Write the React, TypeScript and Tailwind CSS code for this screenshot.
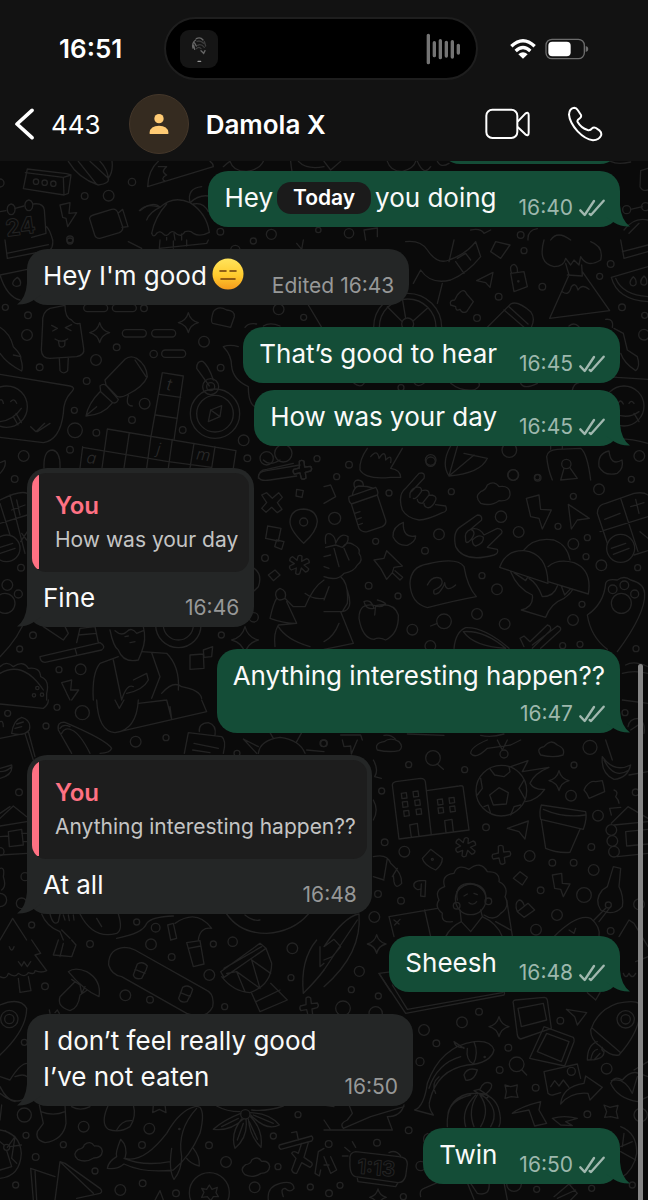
import { ReactNode } from "react";
import { clsx } from "clsx";

interface Quote {
  author: string;
  text: string;
}

interface Message {
  lines: string[];
  time: string;
  mine?: boolean;
  emoji?: boolean;
  edited?: boolean;
  stacked?: boolean;
  tail?: boolean;
  grouped?: boolean;
  split?: boolean;
  quote?: Quote;
}

interface DoodleTile {
  x: number;
  y: number;
  dots: number[][];
  paths: string[];
  labels?: {
    x: number;
    y: number;
    size: number;
    turn: number;
    text: string;
    outlined?: boolean;
  }[];
}

// A split message leaves room for the floating date between its parts
const messages: Message[] = [
  { lines: ["Hey", "you doing"], time: "16:40", mine: true, tail: true, grouped: true, split: true },
  { lines: ["Hey I'm good"], time: "16:43", emoji: true, edited: true, tail: true },
  { lines: ["That’s good to hear"], time: "16:45", mine: true },
  { lines: ["How was your day"], time: "16:45", mine: true, tail: true, grouped: true },
  {
    lines: ["Fine"],
    time: "16:46",
    tail: true,
    quote: { author: "You", text: "How was your day" },
  },
  {
    lines: ["Anything interesting happen??"],
    time: "16:47",
    mine: true,
    tail: true,
    stacked: true,
  },
  {
    lines: ["At all"],
    time: "16:48",
    tail: true,
    quote: { author: "You", text: "Anything interesting happen??" },
  },
  { lines: ["Sheesh"], time: "16:48", mine: true, tail: true },
  { lines: ["I don’t feel really good", "I’ve not eaten"], time: "16:50", tail: true },
  { lines: ["Twin"], time: "16:50", mine: true, tail: true },
];

const sparkle = (x: number, y: number, r: number) => {
  const k = r / 5;
  return `M${x} ${y - r}Q${x + k} ${y - k} ${x + r} ${y}Q${x + k} ${y + k} ${x} ${y + r}Q${x - k} ${y + k} ${x - r} ${y}Q${x - k} ${y - k} ${x} ${y - r}Z`;
};

const pill = (x: number, y: number, w: number) =>
  `M${x} ${y}h${w}a11 11 0 0 1 0 22h${-w}a11 11 0 0 1 0-22Z`;

const square = (x: number, y: number) => `M${x - 8} ${y - 7}l15-2 2 16-15 2Z`;

const cloud = (x: number, y: number) =>
  `M${x - 30} ${y + 20}q-18-16 2-30q16-2 18-14q18-14 30 4q22-2 24 16q-2 20-26 20q-24 16-48 4Z`;

const plus = (x: number, y: number) =>
  `M${x - 7} ${y - 26}q7-6 14 0l2 17 18-2q6 7 0 14l-16 4 2 17q-7 6-14 2l-4-17-17 3q-6-6-2-14l17-4Z`;

const star = (x: number, y: number) =>
  `M${x - 6} ${y - 26}q6-6 12 0l-1 15 15-8q8 2 8 12l-16 7 14 11q0 8-10 10l-12-12-5 17q-8 5-12-1l2-16-15 6q-7-4-5-12l14-7-14-9q0-9 9-12l13 11Z`;

// Drawn at three times the size they are shown at
const tiles: DoodleTile[] = [
  {
    x: 0,
    y: 0,
    dots: [[0, 549, 12], [108, 545, 8], [134, 548, 8], [160, 551, 8], [396, 546, 11], [254, 588, 10], [326, 587, 16], [661, 695, 10], [814, 703, 15], [955, 690, 8], [210, 718, 10]],
    paths: [
      "M82 507L200 521L213 525L205 580L192 585L70 566ZM76 518L190 532L192 585M190 532L213 525",
      "M205 484Q235 535 295 555Q330 550 325 535L270 484M235 484L290 553M300 484Q325 510 325 540M336 484Q340 515 325 535",
      "M443 560L640 500Q640 490 630 484M443 560Q445 510 475 484M475 500L500 500Q480 515 500 525Q480 535 495 545",
      "M670 500Q680 490 690 484Q700 515 740 514Q780 508 790 484M872 484Q875 515 880 530M895 484Q920 510 972 500",
      "M0 635L18 632M45 625L72 618M100 612Q130 608 133 630L138 700L95 712M140 680Q150 690 158 720",
      "M33 612a12 16 0 1 0 1 0ZM86 600a12 16 0 1 0 1 0Z",
      "M180 615L210 608L207 640L230 638L203 680L198 655L188 652Z",
      "M270 660Q265 650 280 645L335 628Q350 625 354 640L368 680Q370 692 358 698L300 715Q288 716 284 705ZM354 640L368 628L384 680L366 682",
      "M418 632Q440 608 480 622Q450 635 440 660M480 622Q520 585 570 608Q620 640 628 697M455 700Q465 650 500 612M570 608Q560 565 605 560M570 608Q600 580 635 590M580 612Q610 605 625 635",
      "M455 700Q460 715 470 700Q480 690 490 702Q500 712 510 698Q520 690 530 702Q545 712 555 695Q570 690 580 700Q600 712 628 697M500 712V720M522 700L525 720M545 702V720M420 632Q460 600 480 622",
    ],
    labels: [{ x: 20, y: 710, size: 70, turn: -8, text: "24", outlined: true }],
  },
  {
    x: 324,
    y: 0,
    dots: [[75, 700, 14], [590, 705, 10], [908, 629, 12], [965, 620, 12]],
    paths: [
      "M0 484L20 510L50 484M190 484Q200 515 235 514Q270 505 275 484M280 484Q300 530 320 500M340 484Q350 505 375 490M860 484Q880 495 920 486",
      "M972 505L950 512L948 560Q955 575 972 570M920 628L955 620",
      "M120 690L125 720M120 690L160 684V710M440 690Q470 684 480 700L500 690M612 720Q610 690 640 686M680 720Q700 690 740 720M900 690Q930 650 972 660M915 700L945 670",
    ],
  },
  {
    x: 0,
    y: 240,
    dots: [[16, 202, 9], [84, 226, 10], [81, 285, 16], [350, 322, 10], [288, 360, 16], [119, 382, 10], [260, 423, 10], [434, 491, 16], [223, 511, 9], [396, 540, 10], [225, 571, 22], [289, 578, 10], [548, 570, 10], [71, 648, 16], [210, 629, 10], [731, 601, 16], [742, 655, 10], [951, 656, 9], [836, 208, 16], [911, 232, 9], [612, 305, 16], [461, 342, 11], [662, 383, 10], [432, 205, 10], [800, 655, 20], [850, 640, 26], [706, 30, 14], [645, 521, 74], [645, 521, 55], [632, 440, 12], [632, 440, 24], [20, 500, 62], [210, 3, 9], [760, 3, 9]],
    paths: [
      "M195 196L150 205Q125 215 128 250L124 330Q125 355 150 355L230 350Q255 345 251 325L240 250Q225 255 215 240Q195 235 195 196M178 355L180 392Q190 405 203 392L205 352M155 256L172 265L158 273M215 254L196 263L213 272M165 297Q185 310 203 297M175 302L178 318Q186 326 194 316L195 301",
      sparkle(299, 278, 30),
      sparkle(565, 248, 30),
      pill(378, 269, 50),
      pill(466, 269, 50),
      pill(496, 330, 50),
      pill(262, 193, 50),
      pill(348, 193, 50),
      "M640 215Q655 195 680 210Q705 212 703 230L692 262L638 250Q630 245 640 215",
      "M315 420L375 358Q390 345 410 355Q440 375 442 410Q430 440 380 465Q360 475 350 468L318 435ZM300 438Q310 428 320 438L355 478Q350 492 338 488L302 455ZM300 455Q265 490 258 528Q310 525 338 488M260 525L290 500M405 360L438 410M385 466Q375 498 397 498",
      "M487 398L550 408L522 600M487 398L453 590M478 463L542 472M467 525L532 535M322 567L708 632L700 684M322 567L306 684M388 578L372 684M453 588L440 684M517 598L505 684M582 610L570 684M645 620L635 684M248 622L505 665L635 682M248 620L240 684",
      "M625 545L632 510L665 497L660 530ZM632 510L660 530M628 438L590 385Q590 362 608 364Q625 375 640 420",
      "M0 403L210 438Q228 442 215 455Q190 480 190 520Q180 600 130 608L0 592M0 545Q40 540 64 505M48 520L64 548M40 530L54 555M92 560L108 575L134 550M112 575L150 550M32 485Q42 472 50 490M0 480Q8 476 10 490",
      "M0 262Q30 280 40 320Q65 345 62 355Q70 380 65 393Q20 370 0 340M40 345L62 350",
      "M82 88L0 105Q20 170 60 180M52 112q-14 10-14 20q6 12 22 4q6-14-8-24ZM15 0L22 55L150 30Q160 20 158 0M20 40L145 14M385 5L425 25M480 0L478 25L620 10L625 0M520 3V25M560 0V18M890 10L905 28L910 0",
      "M670 320Q690 312 715 320M670 320Q695 345 695 380Q700 420 745 440Q745 490 765 500M735 262Q745 248 770 252M790 258Q810 245 840 258M925 195L965 262",
      "M0 700Q20 680 15 662L0 668M132 684Q130 630 158 630Q182 635 180 684M775 715Q775 690 800 688L880 670",
      plus(905, 690),
    ],
    labels: [
      { x: 498, y: 450, size: 50, turn: 8, text: "t" },
      { x: 468, y: 642, size: 48, turn: 8, text: "j" },
      { x: 258, y: 668, size: 48, turn: 8, text: "a" },
      { x: 587, y: 658, size: 48, turn: 8, text: "m" },
    ],
  },
  {
    x: 324,
    y: 240,
    dots: [[600, 32, 9], [860, 72, 10], [827, 109, 9], [655, 140, 10], [524, 170, 10], [459, 234, 10], [894, 202, 10], [962, 226, 9], [960, 284, 16], [231, 443, 9], [320, 660, 16], [75, 674, 10], [556, 630, 22], [568, 705, 16], [946, 648, 16], [38, 710, 9], [640, 712, 8], [583, 124, 2], [251, 262, 102], [251, 262, 85], [251, 252, 18], [900, 498, 60], [727, 672, 14]],
    paths: [
      "M235 175L245 235M310 205L268 242M190 200L235 245",
      "M245 5Q290 0 310 30Q340 75 375 60Q430 40 455 5L470 50Q430 100 380 120Q320 135 290 90L268 130M355 130L340 190M390 0L375 65M395 65L420 100M400 55L425 40L440 60",
      "M515 5L558 15L530 55L500 35ZM560 100L600 95L610 140L570 155ZM562 98Q555 75 570 73Q582 78 580 95",
      "M458 122L507 97L498 142L485 128Z",
      "M400 165Q420 140 428 162L448 185L428 215Q415 222 408 208Q395 215 395 200L380 195Q375 180 392 180Z",
      "M660 0Q640 70 690 80Q720 80 725 55L740 75L750 60L765 75L770 50Q790 85 830 60Q840 20 800 5",
      "M735 105L677 235L857 212L775 95M735 105L725 70M775 108L773 75M730 105L775 108M715 155Q735 170 742 140Q755 125 762 150Q775 130 795 148",
      "M490 262L560 192Q580 180 620 215Q635 235 622 262M540 210L600 262M555 200L612 252",
      "M890 0L900 55L972 35M895 35L972 15M862 112L972 80M862 112Q880 180 972 185M875 115Q895 165 972 170M928 110q-14 14-8 24q10 8 16-2q2-14-8-22ZM960 108q-14 14-8 24q10 8 16-2q2-14-8-22Z",
      "M845 238Q870 235 865 262M870 265L898 280L910 330L940 350Q950 380 935 392Q900 370 890 340M735 258Q750 245 765 260",
      "M820 425Q835 405 880 412L972 418M850 600Q900 590 972 610M745 450Q750 430 765 428M882 490Q890 475 898 492M915 490Q922 478 930 490M870 520Q910 540 945 515M930 520L945 545",
      "M130 625Q105 660 108 690Q125 720 200 712L230 712Q230 690 200 685L235 625M140 650Q160 625 165 655Q185 625 185 660Q205 640 200 668",
      "M380 618Q350 670 375 708Q470 700 490 655L420 640M375 708L400 620M375 708L450 645M90 430Q110 445 120 430M380 430Q410 455 450 450Q470 440 465 430M270 428Q280 445 300 430M590 430Q600 450 640 430",
      "M668 650Q670 630 700 628L770 625Q790 640 800 720M668 650Q672 690 685 720M720 685L710 720L760 715L737 682M680 628V610M715 625V610",
      "M855 633Q820 640 825 680Q840 710 880 700Q900 685 894 660Q860 680 855 633",
    ],
  },
  {
    x: 0,
    y: 460,
    dots: [[44, 57, 10], [22, 375, 16], [55, 402, 12], [63, 323, 10], [99, 526, 10], [59, 567, 9], [177, 629, 9], [242, 628, 16], [664, 525, 9], [761, 472, 14], [795, 294, 10], [911, 186, 12], [112, 684, 5], [102, 706, 5], [126, 704, 5], [20, 265, 40], [15, 430, 30], [535, 495, 68], [535, 495, 45]],
    paths: [
      "M0 120Q60 90 82 100M0 130L30 225M30 105L75 280M0 190L82 165M35 150L75 135M50 120L60 165M0 262L38 250M0 280L45 265M65 220L80 240M82 215L62 245",
      "M785 105L800 98L817 115L836 98L847 112L832 128L846 148L832 158L815 142L798 157L785 145L800 128Z",
      "M911 250Q870 210 870 185Q872 148 911 147Q950 150 952 185Q950 215 911 250",
      "M803 198L843 205L835 243L797 235ZM830 240L852 245L845 268L824 260ZM805 345L825 330L840 345L820 362ZM890 88L910 92L906 112L888 108ZM755 320Q790 340 775 380L755 400",
      star(900, 315),
      "M775 50Q775 35 800 32L900 15M775 50Q780 65 810 60L890 48M790 0Q810 20 840 0",
      plus(905, 30),
      "M810 475Q820 430 830 415Q820 395 840 385Q862 392 855 415Q835 425 832 415M855 415L880 440L915 440Q940 380 972 360M810 475Q850 490 890 490L860 425M890 490L835 495Q820 520 825 560M835 500Q860 540 930 560M915 400Q940 420 972 415",
      "M120 590L300 548Q320 560 305 570L135 607Q120 605 120 590M225 565L230 582M230 548L240 505L285 500L295 548M235 525L290 520M130 500L190 540L205 520L195 500",
      "M330 510Q340 560 355 570Q370 610 415 600L425 575Q440 540 430 500M345 512Q365 530 380 515Q395 500 410 520L430 512M390 548L405 545M375 530L385 528",
      "M280 720Q275 640 300 610L355 590M340 600L365 720M425 575L500 580Q540 620 535 690M455 578L480 650L455 715M400 660L440 640L445 660Q430 690 380 700M485 700Q520 660 545 680Q600 690 605 715M365 720Q380 670 400 680",
      "M570 585L610 582L612 625L570 628ZM610 570L638 560L635 590L612 592Z",
      sparkle(735, 540, 40),
      "M185 668L215 660L212 690L236 690L215 720M185 668L200 700L210 720",
      "M0 620Q20 600 40 620Q70 600 85 625Q120 620 122 650Q150 660 140 700V720M0 640Q70 600 130 690M0 590Q60 530 78 470",
    ],
  },
  {
    x: 324,
    y: 460,
    dots: [[320, 5, 14], [567, 45, 16], [641, 53, 10], [825, 88, 16], [748, 109, 9], [922, 58, 9], [195, 99, 9], [382, 95, 9], [32, 175, 18], [531, 170, 17], [584, 216, 16], [345, 223, 16], [155, 244, 9], [303, 272, 10], [702, 199, 9], [748, 252, 16], [790, 233, 9], [786, 290, 9], [832, 316, 16], [941, 323, 9], [134, 377, 10], [222, 408, 9], [474, 347, 9], [519, 388, 16], [774, 433, 9], [459, 462, 16], [542, 492, 16], [747, 480, 16], [360, 484, 22], [265, 509, 16], [319, 558, 16], [716, 557, 9], [768, 553, 9], [936, 566, 9], [890, 265, 42], [892, 430, 30], [866, 388, 13], [901, 376, 13], [932, 402, 12], [903, 758, 9]],
    paths: [
      "M75 110L155 82Q165 95 160 105L82 132Q72 125 75 110M82 132L105 205Q115 218 130 215L175 200Q188 192 185 180L160 105M85 105Q90 80 105 78Q130 78 150 85M92 82Q85 62 102 60Q118 62 118 76M92 160L108 155M98 178L112 173M102 195L115 190",
      "M235 150Q220 105 245 85L285 40Q305 35 300 55L262 95M335 134L365 138Q372 155 355 158Q310 180 285 180Q250 175 235 150M258 112Q255 90 275 82Q295 78 292 95Q275 120 268 115M292 92Q318 85 315 105L295 130Q280 130 280 118M315 105Q340 105 335 120Q325 145 310 143Q300 140 300 130",
      "M470 130Q450 110 470 95Q485 90 490 75Q510 60 525 80Q560 75 558 105Q555 125 525 122Q500 140 470 130",
      "M607 115L645 105L650 148L682 150L655 207L645 175L620 170Z",
      "M733 133L796 175L760 180L742 207Z",
      "M820 160Q820 135 845 130L930 100Q960 95 972 105M820 160L850 250M890 115L942 275M828 215L972 170M842 178L888 160M920 140L960 128M935 118L945 160M862 265L905 250M868 283L915 265M930 285L972 272M948 215L972 235",
      "M238 187Q205 200 207 230Q220 258 250 256Q275 245 275 228Q235 235 238 187",
      "M395 260Q385 215 410 200L460 165Q475 165 473 180L440 208Q465 200 480 225L520 205Q538 208 533 220L490 262L520 268Q525 280 510 285Q420 310 395 260M425 240Q420 215 440 208Q460 215 440 240Q425 255 425 240M445 240Q465 220 478 232Q480 250 455 258Q445 255 445 240",
      "M150 300L180 295L188 272L235 318L210 322L205 338L188 358L170 325ZM205 338L228 360L236 352L213 332",
      "M258 370Q260 320 310 312Q400 290 420 320Q430 380 457 410Q400 420 310 443Q260 430 258 370M310 375Q325 345 350 355Q365 375 330 390Q325 410 345 398Q360 380 362 368Q365 400 395 375",
      "M527 322Q545 270 600 272Q670 280 672 370ZM598 272Q630 230 690 240Q730 255 738 300M672 320Q700 295 750 308Q805 330 793 402L672 365M560 335Q580 385 625 405Q630 440 592 450L665 472Q680 430 720 415Q740 400 745 390M570 338L605 362L612 350M615 355Q640 370 655 410Q690 410 700 378M712 378L722 405L738 388",
      "M845 370Q850 355 880 360Q900 345 920 360Q960 370 962 400Q965 460 880 575M845 370Q840 430 790 465Q800 530 850 568",
      "M155 437Q105 425 105 475Q115 535 150 538Q165 530 185 540Q225 520 223 465Q210 425 155 437L152 465M120 425Q140 415 150 445Q125 450 120 425M160 420Q180 425 185 432Q170 445 155 437",
      "M390 565Q395 515 425 503Q480 500 555 565M418 515Q480 510 545 565Q450 560 418 515M320 498L340 490",
      "M600 560L588 535L600 528L618 545L670 495Q685 500 678 512L625 565M625 555L700 498Q715 502 708 512L650 565",
      "M5 250Q0 215 20 222Q35 230 35 250Q50 215 72 230Q75 250 55 262L35 255L5 262M55 262Q70 240 90 255Q110 265 105 280Q120 300 100 315Q90 335 60 340Q40 365 0 350M30 265L45 320M60 265L75 300M0 290L20 285M0 320L15 325",
      "M0 80L20 75L35 110L0 130M50 350Q75 370 70 430L55 455L0 455M55 455Q90 450 70 390M50 455L88 550L0 568M45 490Q30 530 0 545M15 380L0 420",
      "M905 615Q930 600 972 620M895 640Q930 630 972 640M895 720L972 730M912 800Q915 775 945 775Q965 790 960 820M920 810L950 790",
      "M50 825H110L115 840M250 822L360 826M180 826Q200 822 215 838M470 826Q500 834 540 822",
    ],
  },
  {
    x: 0,
    y: 700,
    dots: [[23, 40, 9], [171, 22, 9], [247, 38, 21], [138, 78, 9], [407, 125, 16], [498, 113, 9], [57, 277, 10], [711, 160, 9], [65, 610, 16], [95, 675, 9], [410, 666, 9], [467, 683, 13], [970, 130, 10], [75, 530, 12], [0, 600, 20], [0, 455, 12]],
    paths: [
      "M0 12L130 25Q145 15 145 0M290 0Q295 95 345 98Q410 90 415 0M345 0L358 25L372 0M345 98L620 35L605 0M500 0L515 58M415 10L500 0M515 58L510 20",
      "M175 90Q170 65 195 67Q320 120 335 145Q330 160 300 160M175 90L215 160M185 100Q195 80 215 90Q240 100 270 160M180 85Q190 70 210 80",
      "M35 100Q40 60 65 52Q95 60 88 90Q70 110 35 100M45 85L65 80M50 72L70 66M0 115L75 100L100 180M85 95L105 170M0 205L35 195Q40 225 0 235M0 215Q20 215 35 200M0 65Q10 60 10 80",
      "M0 355L40 318L80 350M0 340L30 320M0 378L80 365M25 395L65 388L70 435L28 440ZM0 410L25 408M0 465L82 460M65 400H82M70 425H82M0 505Q15 500 10 530Q20 560 5 570",
      "M553 160L565 98L665 110Q680 120 670 160M598 95Q595 70 625 68Q650 75 645 105M582 130L655 145M578 150L630 158",
      "M775 160Q780 120 840 112Q900 120 915 160M775 140L730 117L770 160M810 98L820 115M905 98L890 125M920 150L972 155",
      "M125 642Q140 680 180 695L190 720M180 642L175 665Q160 680 150 642M185 690L210 715M190 645L195 660M205 645L208 662M220 645L222 660M240 642Q280 720 350 700Q370 690 355 642M290 655L305 680",
      "M0 720L38 655L80 720M503 675L520 670L530 715L512 720ZM525 670Q590 625 635 685Q600 680 595 720M350 715Q430 700 440 670Q455 650 520 648M680 642Q720 700 800 700Q880 695 925 642M735 645Q760 665 780 660",
    ],
  },
  {
    x: 324,
    y: 740,
    dots: [[254, 74, 9], [422, 89, 9], [798, 22, 21], [750, 75, 9], [173, 153, 9], [741, 167, 16], [935, 157, 10], [486, 262, 10], [822, 227, 16], [182, 307, 10], [241, 335, 16], [802, 321, 10], [617, 348, 16], [685, 368, 10], [749, 368, 10], [809, 390, 16], [650, 451, 10], [780, 465, 22], [162, 462, 10], [231, 482, 10], [151, 531, 16], [699, 525, 16], [636, 569, 16], [860, 573, 10], [945, 493, 16], [106, 694, 15], [82, 749, 9], [163, 768, 9], [327, 54, 22], [532, 152, 76], [440, 478, 46], [398, 497, 10], [493, 484, 10], [853, 495, 9], [862, 270, 16], [865, 303, 16], [870, 335, 16], [325, 358, 3], [540, 42, 12], [0, 10, 10]],
    paths: [
      "M340 72L358 88M55 0L60 20L80 18L82 42L100 0M148 60Q165 90 152 110L172 115M148 180Q165 210 148 240",
      "M205 135Q205 128 215 125L290 115Q302 115 304 125L322 285M205 135L225 297L435 270L417 140Q415 136 405 138L308 152M262 292L257 255L280 250L285 290M366 278L362 242L384 238L388 275",
      [[240, 167], [275, 162], [243, 193], [280, 188], [247, 220], [284, 215], [348, 186], [383, 181], [350, 211], [385, 207]].map(([x, y]) => square(x, y)).join(""),
      "M525 143L553 158L547 192L508 195L497 165ZM497 85L512 105L540 110L558 95L555 80M470 115L475 145L460 165M600 120L585 145L602 175M480 200L492 195L500 220M590 195L570 200L560 225",
      "M560 80L612 62L595 95L675 82Q630 100 618 130Q630 150 662 148Q640 180 605 185",
      "M160 30Q150 10 180 5Q200 -10 225 5Q240 20 225 32Q195 38 160 30M650 45Q635 25 660 20Q680 -5 700 15Q725 25 717 45Q690 55 650 45",
      "M490 0Q440 20 440 40Q455 60 490 25L560 15L590 0M520 0L535 30L550 0",
      sparkle(705, 122, 30),
      sparkle(158, 612, 28),
      "M785 140Q800 120 815 125L835 122Q840 140 842 155L795 175Q790 160 780 150ZM870 150Q885 155 875 170Q885 180 885 190",
      "M652 195L785 215Q790 235 778 268L650 238Q645 215 652 195M658 208Q720 235 783 225M652 242L665 325Q700 340 738 337L768 268",
      "M550 265L613 243L603 297L585 275Z",
      star(427, 322),
      plus(530, 345),
      "M295 355L320 328L355 355Q355 375 335 390Q300 375 295 355",
      "M148 350Q190 340 200 370Q235 400 233 430Q215 450 210 425L208 405M190 355L180 415M220 385L205 410M148 410L180 420",
      "M300 422Q265 420 270 440Q280 455 292 445M285 422L305 422L303 470L290 468L292 432",
      "M385 545Q350 550 355 520Q330 500 345 480Q330 450 362 440Q350 405 390 400Q400 370 435 388Q470 360 490 395Q530 395 525 425Q555 440 543 470Q560 500 530 520Q510 545 480 525M400 480Q390 430 440 430Q490 435 485 480M398 455Q440 410 482 455M420 468L430 462M450 460L460 464M435 488Q448 498 458 485M408 510L412 545L440 575L475 530L470 510M365 590Q380 560 412 545M475 530Q520 550 535 590",
      "M195 530L340 505M195 530L210 590M302 510L320 590M548 480L565 588M210 540L225 552M228 538L212 555M515 545L560 570",
      "M588 395L610 412L595 435L568 415ZM685 405L713 400L715 430L738 432L718 470L710 448L692 445ZM580 515L612 490L632 510L600 532ZM580 515Q570 490 585 480Q595 480 600 495",
      "M868 380L890 385L885 440Q900 470 895 500Q870 530 830 510Q810 480 835 450L850 440ZM845 505L810 540M860 500L825 545M690 590Q760 520 800 535Q830 560 825 590M735 570L750 580M755 565L750 580",
      "M845 0L865 60M835 50Q830 100 870 118Q910 115 920 75Q870 100 835 50M840 60Q870 120 915 90M915 105L972 95",
      "M862 225L857 205L890 202M862 250L912 200L972 235M870 255L972 245M880 350L972 340M905 275L972 268M905 275L908 318L972 312",
      "M105 522Q60 530 0 620M105 522Q115 640 0 740M0 690L100 540M0 620L30 598L50 620L25 650L0 660M165 700L205 695M165 700L200 755",
      "M885 590L915 540L930 550L972 620M898 700Q905 720 915 700Q925 720 935 700M935 665L972 650M945 650V680",
    ],
  },
  {
    x: 0,
    y: 940,
    dots: [[270, 12, 10], [453, 13, 16], [515, 51, 10], [640, 12, 9], [698, 5, 14], [877, 25, 16], [135, 139, 10], [376, 166, 16], [450, 179, 10], [628, 105, 16], [674, 200, 9], [873, 113, 9], [73, 307, 9], [73, 525, 21], [251, 560, 16], [448, 566, 16], [894, 524, 9], [820, 588, 9], [426, 615, 10], [190, 614, 9], [107, 651, 10], [78, 586, 9], [627, 616, 10], [678, 666, 16], [834, 680, 9], [285, 693, 9], [47, 735, 9], [361, 750, 16], [428, 730, 10], [528, 760, 10], [764, 742, 16], [931, 741, 9], [28, 237, 26], [28, 237, 14], [736, 523, 14], [628, 758, 60], [20, 622, 9], [538, 567, 2]],
    paths: [
      "M375 22Q325 25 326 75Q335 105 365 110L560 220Q620 240 638 200Q645 160 615 148L405 30Q390 22 375 22",
      "M412 72Q430 62 442 78L438 90L425 115Q405 120 400 105ZM405 88L435 100M548 142Q566 132 578 148L574 160L561 185Q541 190 536 175ZM541 158L571 170",
      "M0 110Q20 120 25 100Q45 115 55 100Q75 115 85 98Q105 105 105 92Q125 100 140 92L105 45L122 40L95 0M55 115L60 157L93 152L85 110M55 65L65 78L72 65L82 80L92 65M28 20Q35 40 42 20",
      "M160 45L175 0M160 45L215 50L228 15L215 0M180 50L190 10",
      "M205 95Q225 80 260 95Q305 120 297 170Q250 150 205 95M225 125L180 170Q170 200 210 212Q235 205 240 165L262 150M215 118L240 135L245 160L255 140M150 220L148 210M165 218L172 210L178 220",
      "M560 8L600 2L612 72L580 80ZM565 25L602 18",
      "M662 95L780 10L798 25L672 112ZM665 110Q700 155 750 158Q815 135 815 70L798 25M755 160L780 215L862 180L812 130M768 185L840 150M680 100L710 95L735 155M710 95L780 145L755 60L812 100M672 85L785 20",
      "M910 160Q900 60 950 0M910 160Q950 120 972 90M960 20V80L972 70",
      plus(925, 200),
      "M0 195Q60 170 80 205Q80 270 0 345M0 410L30 420Q60 370 82 370M0 440Q20 480 45 485M0 460Q50 500 82 470M45 410Q70 400 82 410M5 495L0 540",
      "M118 495L130 550L112 575Q105 600 135 608Q190 600 198 550L195 495M122 515Q160 530 195 515",
      "M325 495Q300 550 325 568Q360 580 390 560Q410 530 400 495M350 570Q365 540 395 542M460 495L458 518L478 508L498 518L495 495M215 500Q240 515 270 500",
      "M585 500Q540 510 500 580Q430 670 375 655Q385 620 362 598Q345 640 350 650Q325 665 322 685Q350 690 372 672Q430 700 520 690Q570 650 600 580Q615 520 600 502Q590 498 585 500M372 655Q430 680 510 665M515 625Q505 690 522 718Q545 690 545 650Q530 570 590 505M580 625Q600 650 598 678Q570 670 560 655",
      "M722 520Q670 540 640 568Q690 575 730 537M725 537Q690 580 705 625Q745 590 738 538M745 537Q750 590 783 622Q790 570 752 530M752 525Q800 575 838 555Q810 520 752 518M650 498Q680 515 720 515M850 498Q800 515 755 510M665 560L715 535M712 600L730 550M772 598L748 545M820 550L760 525",
      cloud(263, 638),
      cloud(765, 684),
      "M838 615L935 588Q942 595 935 603L842 628Q834 622 838 615M875 578L890 575L895 600M905 610L895 640Q880 630 875 640L888 655L875 690Q880 702 890 700L905 668L930 682Q940 675 935 668L912 652L925 608M945 700L955 635L972 625M945 700L958 708L962 690",
      "M92 685L165 710M92 685L100 780M180 665L165 780M180 665L195 670L300 745Q310 755 300 760L230 775M180 665L280 760M105 692L110 780",
      "M0 570Q60 580 64 640Q60 710 0 715M15 572L45 590L22 622M20 632L35 680L0 690M30 620L64 615M0 605L12 615M45 590L35 655L50 670",
      "M628 735L636 748L652 742L648 758L655 770L640 770L632 782L622 770L605 772L612 757L605 745L620 748ZM465 780L480 752L490 780M805 780Q800 740 840 730Q880 720 882 745Q870 760 855 745Q840 745 850 770",
    ],
  },
  {
    x: 324,
    y: 960,
    dots: [[57, 145, 22], [465, 155, 10], [414, 187, 16], [709, 182, 10], [337, 250, 10], [553, 263, 10], [527, 330, 10], [848, 326, 16], [635, 383, 10], [790, 463, 10], [254, 511, 10], [159, 548, 10], [14, 552, 10], [290, 618, 14], [48, 676, 9], [15, 700, 10], [238, 710, 9], [638, 688, 9], [803, 685, 9], [925, 675, 9], [300, 210, 16], [950, 465, 20], [288, 305, 12], [905, 178, 26], [905, 178, 14], [578, 313, 22], [742, 334, 12], [482, 291, 2], [570, 672, 22], [155, 160, 20]],
    paths: [
      "M165 40L245 160L540 105Q545 95 535 95M205 75L250 148L535 98",
      sparkle(525, 200, 30),
      sparkle(162, 712, 25),
      "M568 130Q565 122 575 120L660 112Q668 112 670 120L682 205L590 237Q582 235 580 225ZM582 145L658 130L668 180L592 200Z",
      "M660 200L748 232Q752 238 750 245L722 318L617 295ZM668 220L735 245L712 305L640 275Z",
      "M660 335L760 312L770 355M660 335L672 400Q680 408 690 404L710 398M680 380L692 362L705 378L718 360L735 382",
      "M727 148L788 158L760 195L752 170ZM594 330L608 345M790 98L815 120L828 98",
      "M800 210Q820 150 880 130Q930 120 945 130Q960 200 885 285Q860 290 830 260Q800 240 800 210M805 205L890 278M820 245Q790 255 790 300Q840 300 840 275Q830 270 835 262M800 300Q805 270 820 268M810 300L828 280",
      "M510 270Q500 240 450 245Q350 260 310 370Q300 440 272 450L328 465Q310 440 318 420Q340 330 430 315Q500 310 510 270M390 245L420 265M390 245Q395 265 420 262M450 245Q465 280 448 312Q425 300 430 265M420 345Q430 320 460 330Q450 365 425 360ZM315 385Q340 310 410 290M335 400Q320 370 345 350",
      "M370 500Q365 420 430 402Q500 390 522 440Q535 480 525 500M425 500Q410 450 455 405M460 405Q430 450 450 500M468 405Q500 450 470 500M475 405Q530 450 500 500M450 392L488 415L495 408L465 388ZM468 388Q480 360 500 370Q510 380 488 400M372 460Q380 420 440 405",
      "M543 375L560 380L580 375L577 395L582 412L562 410L543 415L547 395ZM840 435L858 442L882 436L877 455L882 475L860 470L842 472L848 455Z",
      "M710 432Q715 380 780 370L785 348L835 382L798 420L792 400Q740 395 710 432",
      "M565 460Q590 440 650 425L645 450L668 490L632 498L615 450ZM685 475Q720 465 760 475L725 485L745 497L710 495Z",
      "M860 370Q870 345 895 360Q920 330 945 340L972 350M860 370Q880 415 940 425L972 410M862 362Q900 350 925 400L940 350M930 330L972 305",
      "M0 510H205L190 470Q230 470 240 435M75 435L85 460L70 480Q45 490 58 505L140 470L240 440M0 435L30 440M0 480L20 510",
      "M78 600Q75 578 95 575L225 590Q250 592 250 612L245 648Q240 668 222 668L95 650Q75 645 78 600M100 655L102 665L215 680L222 668M195 578Q215 568 230 588M85 545L95 562M62 562L78 575M55 588L72 588M0 590L20 640L38 630L20 590M0 615H15",
      "M300 545Q295 525 312 520M890 500Q940 520 938 580Q930 630 890 655M890 560L925 545M890 575L935 600M900 520L895 560",
      "M290 710Q285 690 300 685L340 668M440 670L460 700Q500 710 495 668M540 668L550 720M690 710L735 672L760 700L740 720M735 672L765 668M700 715L755 690M430 668L450 718",
    ],
    labels: [{ x: 98, y: 640, size: 62, turn: 5, text: "1:13", outlined: true }],
  },
];

const Wallpaper = () => (
  <svg
    aria-hidden="true"
    viewBox="0 161 648 1039"
    preserveAspectRatio="xMidYMin slice"
    className="absolute inset-0 h-full w-full"
    fill="none"
    stroke="#232323"
    strokeWidth={4}
    strokeLinecap="round"
    strokeLinejoin="round"
  >
    {tiles.map((tile) => (
      <g
        key={`${tile.x}-${tile.y}`}
        transform={`translate(${tile.x} ${tile.y}) scale(${1 / 3})`}
      >
        {tile.dots.map(([cx, cy, r], index) => (
          <circle key={index} cx={cx} cy={cy} r={r} />
        ))}
        {tile.paths.map((d, index) => (
          <path key={index} d={d} />
        ))}
        {tile.labels?.map(({ x, y, size, turn, text, outlined }) => (
          <text
            key={text}
            fontSize={size}
            fontWeight={outlined ? 700 : 300}
            fontStyle={outlined ? "normal" : "italic"}
            fill={outlined ? "none" : "#2a2a2a"}
            stroke={outlined ? "#232323" : "none"}
            strokeWidth={3}
            fontFamily="Inter, sans-serif"
            transform={`translate(${x} ${y}) rotate(${turn})`}
          >
            {text}
          </text>
        ))}
      </g>
    ))}
  </svg>
);

const Ticks = () => (
  <svg width="26" height="18" viewBox="0 0 78 54" fill="none" stroke="#a1b8af" strokeWidth={7} strokeLinecap="round" strokeLinejoin="round" aria-label="Delivered">
    <path d="M4 34L17 48L45 6" />
    <path d="M32 45L36 48L74 5" />
  </svg>
);

const Expressionless = () => (
  <svg width="32" height="32" viewBox="0 0 32 32" role="img" aria-label="Expressionless face" className="ml-[5px]">
    <defs>
      <linearGradient id="face" x1="0" y1="0" x2="0" y2="1">
        <stop offset="0" stopColor="#ffe45c" />
        <stop offset="0.55" stopColor="#ffcb2e" />
        <stop offset="1" stopColor="#f59a1c" />
      </linearGradient>
    </defs>
    <circle cx="16" cy="16" r="15.5" fill="url(#face)" />
    <path d="M8 13H14M18 13H24M9 21H23" stroke="#6b3d0c" strokeWidth={1.6} strokeLinecap="round" />
  </svg>
);

const Tail = ({ mine }: { mine?: boolean }) => (
  <svg
    width="28"
    height="26"
    viewBox="0 0 28 26"
    aria-hidden="true"
    className={clsx(
      "absolute bottom-0",
      mine ? "-right-[10px] fill-[#144d37]" : "-left-[10px] -scale-x-100 fill-[#242626]"
    )}
  >
    <path d="M4 0H18V4Q19 19 28 25.500Q19 26 12 21.500L4 16Z" />
  </svg>
);

const Stamp = ({ message }: { message: Message }) => (
  <div
    className={clsx(
      "flex h-6 shrink-0 items-center gap-[6px] self-end text-[21px] leading-6",
      message.mine ? "text-[#9db8ad]" : "text-[#979898]"
    )}
  >
    {message.edited && <span>Edited</span>}
    <time>{message.time}</time>
    {message.mine && <Ticks />}
  </div>
);

const QuoteCard = ({ quote }: { quote: Quote }) => (
  <blockquote className="mx-[5px] mt-[5px] flex h-[99px] overflow-hidden rounded-[14px] bg-[#1d1d1d]">
    <div className="mb-[3px] w-[7px] bg-[#ff7183]" />
    <div className="pt-4 pr-[11px] pl-4 leading-[34px]">
      <p className="text-[24px] font-semibold text-[#ff7183]">{quote.author}</p>
      <p className="text-[21px] whitespace-nowrap text-[#c4c4c4]">{quote.text}</p>
    </div>
  </blockquote>
);

const Bubble = ({ message }: { message: Message }) => (
  <li
    className={clsx(
      "flex",
      message.mine ? "justify-end" : "justify-start",
      message.grouped ? "mt-[7px]" : "mt-[22px]"
    )}
  >
    <div
      className={clsx(
        "relative rounded-[20px]",
        message.mine ? "bg-[#144d37]" : "bg-[#242626]"
      )}
    >
      {message.tail && <Tail mine={message.mine} />}
      {message.quote && <QuoteCard quote={message.quote} />}
      <div
        className={clsx(
          "relative flex justify-between pr-[15px] pb-[7px] pl-4",
          message.quote ? "pt-2" : "pt-[9px]",
          message.stacked ? "flex-col gap-1" : message.mine ? "gap-[22px]" : "gap-7"
        )}
      >
        <div className="flex pb-1">
          <p
            className={clsx(
              "text-[26px] leading-9 text-[#fafafa]",
              message.split && "flex gap-[102px]"
            )}
          >
            {message.lines.map((line) => (
              <span key={line} className="block whitespace-nowrap">
                {line}
              </span>
            ))}
          </p>
          {message.emoji && <Expressionless />}
        </div>
        <Stamp message={message} />
      </div>
    </div>
  </li>
);

const StatusBar = () => (
  <div className="grid grid-cols-[1fr_314px_1fr] items-center pt-[17px] pr-[6px]">
    <time className="pl-[59px] text-[26px] font-semibold">16:51</time>
    <div className="flex h-[63px] items-center justify-between rounded-full border-2 border-[#1e1e1e] bg-black px-[14px]">
      <div className="flex h-[38px] w-[38px] items-center justify-center rounded-[9px] bg-[#151515]">
        <svg width="20" height="30" viewBox="0 0 60 90" fill="none" stroke="#666666" strokeWidth={4} strokeLinecap="round" aria-hidden="true">
          <path d="M12 42Q8 26 20 18M22 14Q34 8 42 18M14 34L17 46M16 26L22 36M36 50L44 58L48 50" />
          <path d="M24 22Q34 18 44 28M26 34Q36 28 46 40M22 44Q30 36 36 44M46 22L50 36" stroke="#3c3c3c" />
          <path d="M27 82H35" stroke="#999999" />
        </svg>
      </div>
      <svg width="36" height="32" viewBox="0 0 108 96" stroke="#747474" strokeWidth={10} strokeLinecap="round" aria-hidden="true">
        <path d="M7 7V89M25 29V68M43 23V74M61 28V69M79 26V72M97 37V60" />
      </svg>
    </div>
    <div className="flex items-center gap-[9px] pl-8">
      <svg width="26" height="20" viewBox="0 0 78 60" fill="none" stroke="#ffffff" strokeWidth={10} aria-label="Wi-Fi">
        <path d="M4 22Q39 -11 74 22" />
        <path d="M17 36Q39 15 61 36" />
        <path d="M39 59L25 46Q39 34 53 46Z" fill="#ffffff" stroke="none" />
      </svg>
      <svg width="44" height="22" viewBox="0 0 132 66" aria-label="Battery">
        <rect x="3" y="4" width="115" height="58" rx="18" fill="none" stroke="#6c6c6c" strokeWidth={4} />
        <rect x="10" y="11" width="67" height="44" rx="12" fill="#ffffff" />
        <path d="M122 24Q130 26 130 33Q130 40 122 42Z" fill="#6c6c6c" />
      </svg>
    </div>
  </div>
);

const IconButton = ({ label, children }: { label: string; children: ReactNode }) => (
  <button type="button" aria-label={label} className="flex shrink-0 items-center">
    {children}
  </button>
);

const ChatHeader = () => (
  <div className="flex h-[81px] items-center pt-[7px] pr-[45px] pl-[14px]">
    <button type="button" aria-label="Back, 443 unread" className="flex items-center gap-4 text-[26px]">
      <svg width="21" height="32" viewBox="0 0 63 96" fill="none" stroke="#ffffff" strokeWidth={11} strokeLinecap="round" strokeLinejoin="round">
        <path d="M54 7L9 48L54 89" />
      </svg>
      443
    </button>
    <div className="ml-7 flex h-[60px] w-[60px] shrink-0 items-center justify-center rounded-full border border-[#44372a] bg-[#352b20]">
      <svg width="20" height="22" viewBox="0 0 60 66" fill="#ffcb74" aria-hidden="true">
        <circle cx="30" cy="17" r="14" />
        <path d="M2 63V58Q4 38 30 38Q56 38 58 58V63Z" />
      </svg>
    </div>
    <h1 className="ml-[17px] flex-1 text-[26px] font-semibold whitespace-nowrap">Damola X</h1>
    <div className="flex items-center gap-9">
      <IconButton label="Video call">
        <svg width="46" height="32" viewBox="0 0 138 96" fill="none" stroke="#ffffff" strokeWidth={6} strokeLinejoin="round">
          <rect x="4" y="5" width="93" height="85" rx="18" />
          <path d="M98 41L121 17Q131 10 131 22V74Q131 86 121 79L98 57" />
        </svg>
      </IconButton>
      <IconButton label="Voice call">
        <svg width="36" height="36" viewBox="730 316 108 108" fill="none" stroke="#ffffff" strokeWidth={6} strokeLinejoin="round">
          <path d="M736 342Q737 322 752 321Q758 321 762 328L772 343Q774 349 768 353Q759 358 762 364Q772 382 792 388Q800 390 805 383Q810 378 817 382L828 390Q835 396 832 405Q826 418 808 419Q785 416 762 392Q738 366 736 342Z" />
        </svg>
      </IconButton>
    </div>
  </div>
);

const App = () => {
  return (
    <div className="flex min-h-screen flex-col bg-[#0a0a0a] font-[Inter,sans-serif] text-white">
      <header className="bg-[#121212]">
        <StatusBar />
        <ChatHeader />
      </header>
      <main className="relative flex-1 overflow-hidden pb-4">
        <Wallpaper />
        <div className="relative pr-7 pl-[27px]">
          <div className="flex h-[3px] items-end justify-end overflow-hidden">
            <div className="h-14 w-[180px] shrink-0 rounded-[20px] bg-[#144d37]" />
          </div>
          <ul>
            {messages.map((message, index) => (
              <Bubble key={index} message={message} />
            ))}
          </ul>
        </div>
        <div className="absolute top-[21px] left-1/2 flex h-8 w-[94px] -translate-x-1/2 items-center justify-center rounded-[14px] bg-[#1b1b1b] text-[21px] font-semibold">
          Today
        </div>
        <div className="absolute top-[503px] right-[5px] bottom-0 w-[5px] rounded-t-full bg-[#868686]" />
      </main>
    </div>
  );
};

export default App;
